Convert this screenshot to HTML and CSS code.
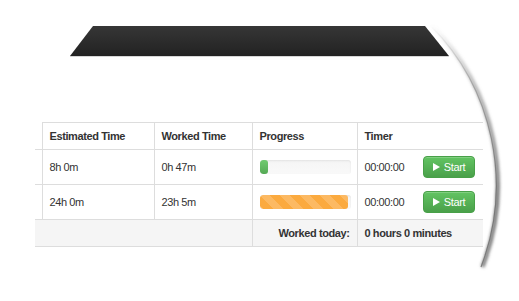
FILE: index.html
```html
<!DOCTYPE html>
<html lang="en">
<head>
  <meta charset="UTF-8" />
  <title>Task Timer</title>
  <link rel="stylesheet" href="styles.css">
</head>
<body>

  <div class="stage">
    <div class="topbar-wrap">
      <div class="topbar"></div>
    </div>

    <table class="tasks">
      <thead>
        <tr>
          <th class="edge"></th>
          <th class="c-est">Estimated Time</th>
          <th class="c-work">Worked Time</th>
          <th class="c-prog">Progress</th>
          <th class="c-timer">Timer</th>
        </tr>
      </thead>
      <tbody>
        <tr>
          <td class="edge"></td>
          <td>8h 0m</td>
          <td>0h 47m</td>
          <td>
            <div class="progress"><div class="bar bar-green" style="width: 9%"></div></div>
          </td>
          <td>
            <div class="timer">
              <span>00:00:00</span>
              <button class="btn-start"><span class="play"></span>Start</button>
            </div>
          </td>
        </tr>
        <tr>
          <td class="edge"></td>
          <td>24h 0m</td>
          <td>23h 5m</td>
          <td>
            <div class="progress"><div class="bar bar-orange" style="width: 97%"></div></div>
          </td>
          <td>
            <div class="timer">
              <span>00:00:00</span>
              <button class="btn-start"><span class="play"></span>Start</button>
            </div>
          </td>
        </tr>
      </tbody>
      <tfoot>
        <tr>
          <td colspan="3" class="foot-blank"></td>
          <td class="foot-label">Worked today:</td>
          <td class="foot-total">0 hours 0 minutes</td>
        </tr>
      </tfoot>
    </table>

    <!-- lens edge -->
    <svg class="lens" width="519" height="301" viewBox="0 0 519 301">
      <defs>
        <linearGradient id="fade" x1="0" y1="25" x2="0" y2="268" gradientUnits="userSpaceOnUse">
          <stop offset="0" stop-color="#888" stop-opacity="0"/>
          <stop offset="0.25" stop-color="#888" stop-opacity="0.6"/>
          <stop offset="0.7" stop-color="#777" stop-opacity="1"/>
          <stop offset="1" stop-color="#777" stop-opacity="0.9"/>
        </linearGradient>
        <filter id="soft" x="-20%" y="-20%" width="140%" height="140%">
          <feGaussianBlur stdDeviation="1.6"/>
        </filter>
      </defs>
      <path d="M430 25 A227 227 0 0 1 481 267" fill="none" stroke="url(#fade)" stroke-width="4" filter="url(#soft)" transform="translate(1.5 0)"/>
      <path d="M430 25 A227 227 0 0 1 481 267" fill="none" stroke="url(#fade)" stroke-width="1.2"/>
    </svg>
  </div>

</body>
</html>
```

FILE: styles.css
```css
* { margin: 0; padding: 0; box-sizing: border-box; }

body {
  background: #fff;
  font-family: 'Liberation Sans', Arial, sans-serif;
  color: #333;
}

.stage {
  position: relative;
  width: 519px;
  height: 301px;
  overflow: hidden;
}

.topbar-wrap {
  margin: 26px 0 0 70px;
  width: 379px;
  border-bottom: 1px solid #d6d6d6;
}

.topbar {
  height: 30px;
  background: linear-gradient(#363636, #222);
  clip-path: polygon(23px 0, 355px 0, 100% 100%, 0 100%);
}

.tasks {
  margin: 65px 0 0 35px;
  width: 448px;
  border-collapse: collapse;
  font-size: 11px;
  letter-spacing: -0.4px;
  table-layout: fixed;
}

.tasks th,
.tasks td {
  border-top: 1px solid #ddd;
  border-left: 1px solid #ddd;
  padding: 0 7px;
  text-align: left;
  vertical-align: middle;
}

.tasks th {
  height: 27px;
  font-weight: bold;
}

.tasks tbody td { height: 35px; }

.tasks .edge {
  width: 7px;
  border-left: none;
  padding: 0;
}

.tasks thead .edge { border-top: none; }

.c-est { width: 112px; }
.c-work { width: 98px; }
.c-prog { width: 105px; }

.progress {
  height: 14px;
  width: 91px;
  border-radius: 3px;
  background: linear-gradient(#f5f5f5, #f9f9f9);
  box-shadow: inset 0 1px 2px rgba(0, 0, 0, 0.08);
  overflow: hidden;
}

.bar {
  height: 100%;
  border-radius: 3px;
}

.bar-green {
  background: linear-gradient(#6fcb6f, #55a955);
}

.bar-orange {
  background-color: #fbaa3f;
  background-image: linear-gradient(45deg,
    rgba(255, 255, 255, 0.18) 25%, transparent 25%,
    transparent 50%, rgba(255, 255, 255, 0.18) 50%,
    rgba(255, 255, 255, 0.18) 75%, transparent 75%, transparent);
  background-size: 20px 20px;
}

.timer {
  display: flex;
  align-items: center;
  justify-content: space-between;
  padding-right: 1px;
}

.btn-start {
  display: flex;
  align-items: center;
  justify-content: center;
  gap: 4px;
  width: 52px;
  height: 22px;
  border: 1px solid #48a048;
  border-radius: 4px;
  background: linear-gradient(#62c462, #4aa04a);
  color: #fff;
  font-family: 'Liberation Sans', Arial, sans-serif;
  font-size: 11px;
  letter-spacing: -0.3px;
  box-shadow: inset 0 1px 0 rgba(255, 255, 255, 0.2);
}

.play {
  width: 0;
  height: 0;
  border-top: 4px solid transparent;
  border-bottom: 4px solid transparent;
  border-left: 7px solid #fff;
}

.tasks tfoot td {
  height: 27px;
  background: #f5f5f5;
  border-bottom: 1px solid #ddd;
  font-weight: bold;
}

.tasks tfoot .foot-blank { border-left: none; }

.tasks tfoot .foot-label { text-align: right; }

.lens {
  position: absolute;
  left: 0;
  top: 0;
  pointer-events: none;
}
```
